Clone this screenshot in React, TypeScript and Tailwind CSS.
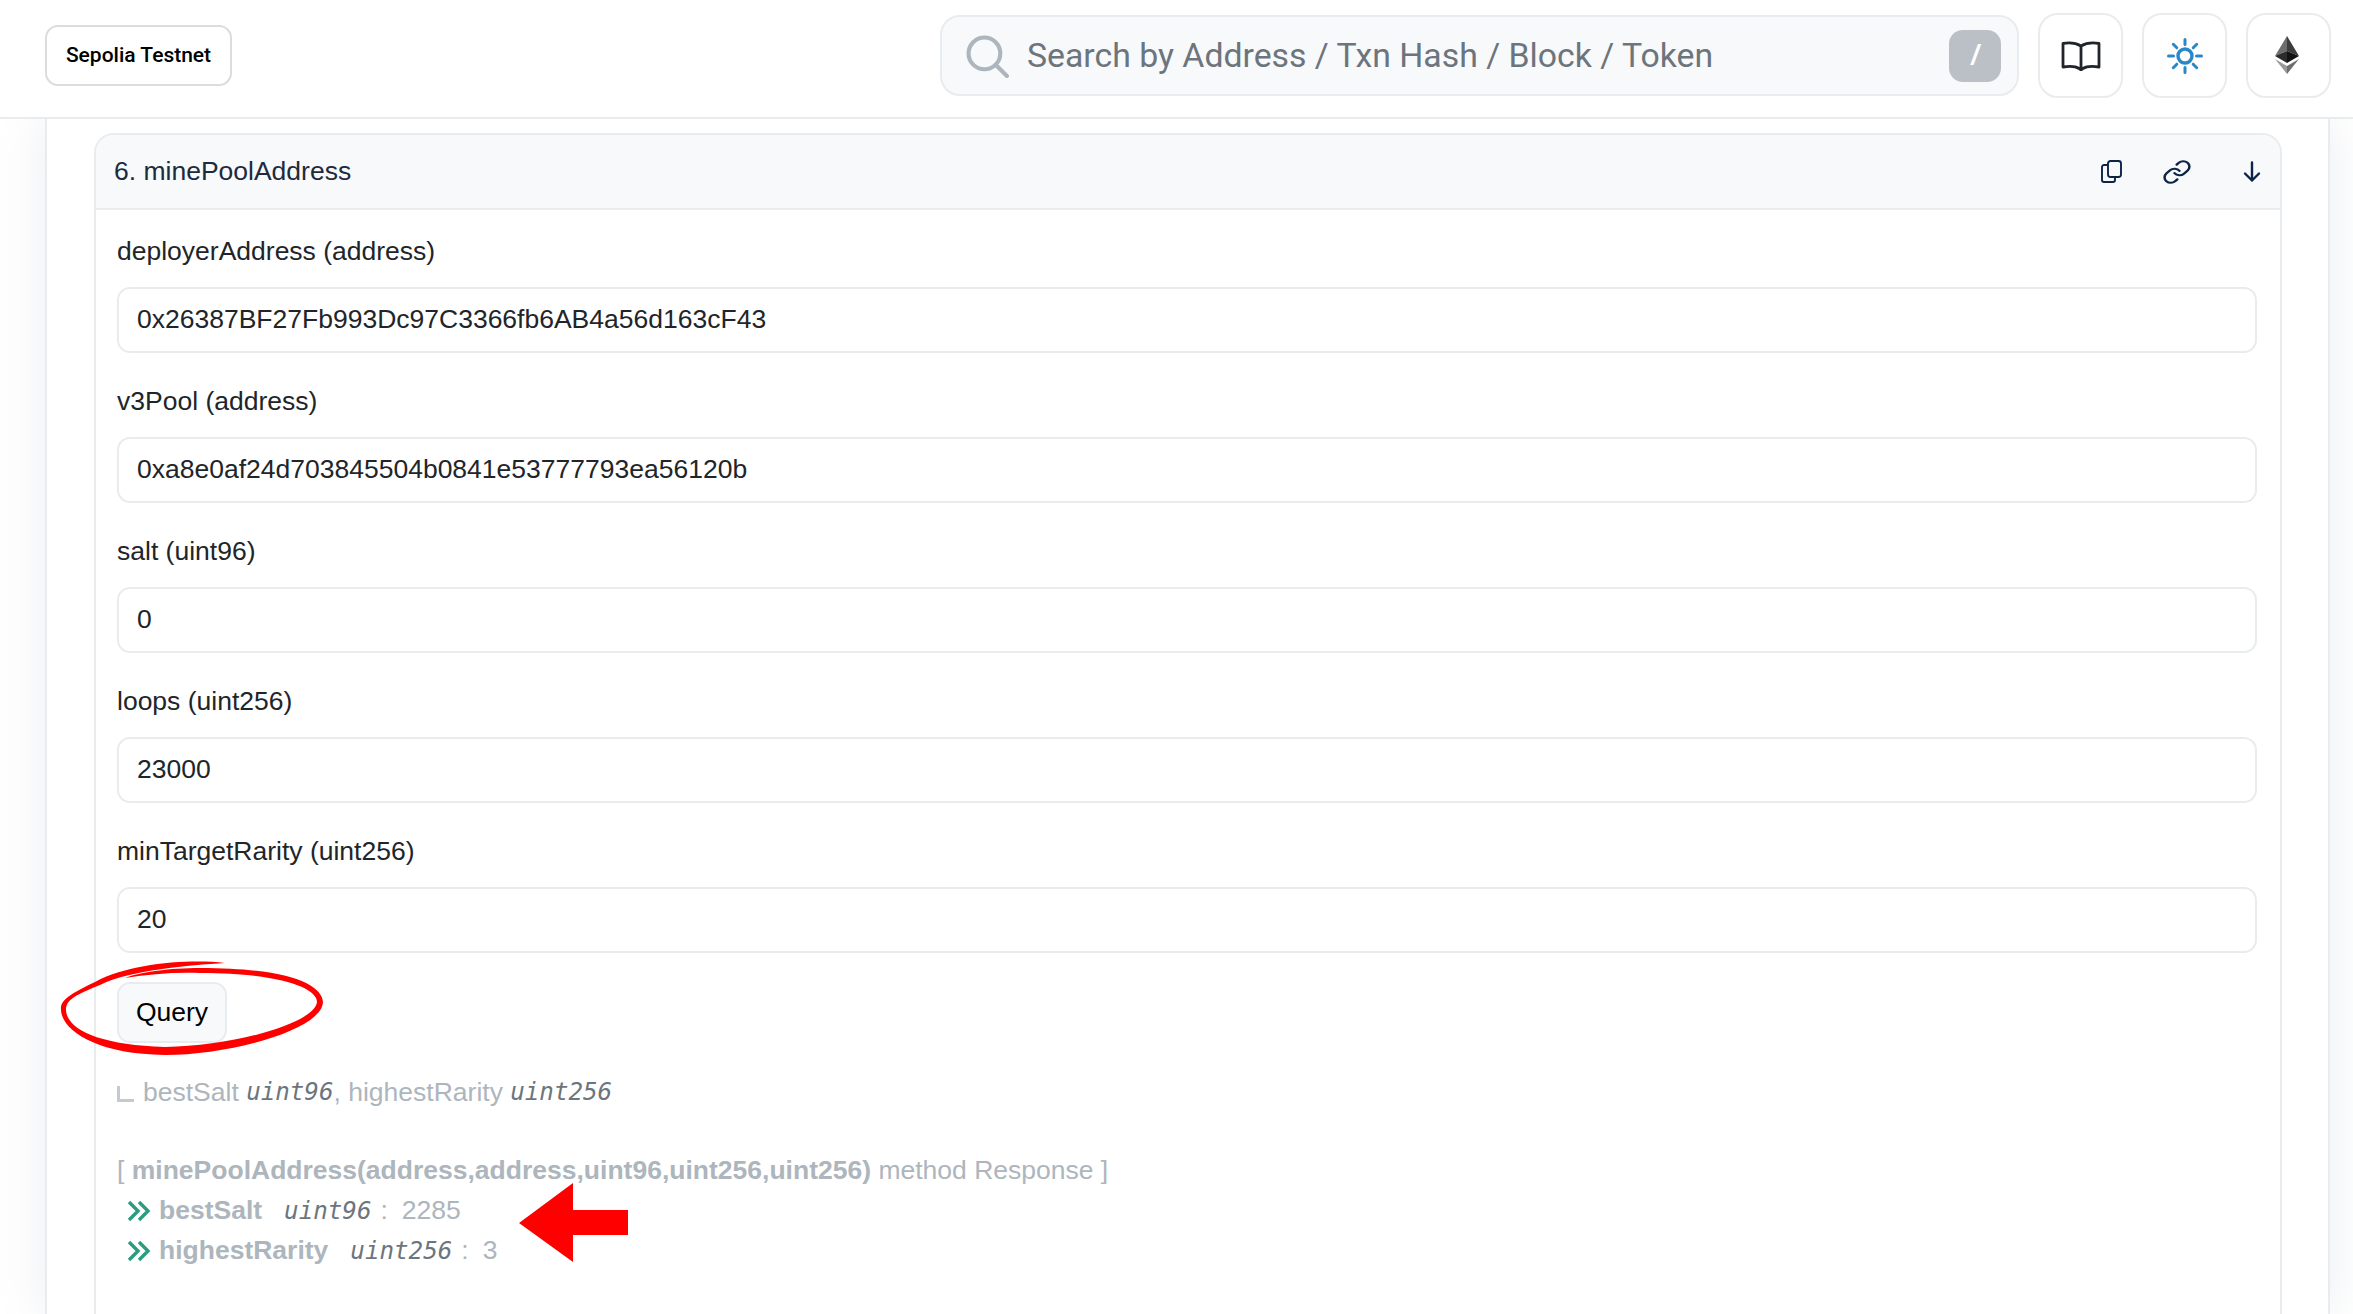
const sans = "font-['Liberation_Sans',Arial,sans-serif]";

const fields = [
  ["deployerAddress (address)", "0x26387BF27Fb993Dc97C3366fb6AB4a56d163cF43"],
  ["v3Pool (address)", "0xa8e0af24d703845504b0841e53777793ea56120b"],
  ["salt (uint96)", "0"],
  ["loops (uint256)", "23000"],
  ["minTargetRarity (uint256)", "20"],
];

function Mono({ children }: { children: React.ReactNode }) {
  return <span className="font-['DejaVu_Sans_Mono',monospace] italic text-[24.2px] text-[#6c757d]">{children}</span>;
}

function Chevrons() {
  return (
    <svg width="24" height="22" viewBox="0 0 24 22" fill="none" stroke="#2a9d7f" strokeWidth="3.4" className="shrink-0">
      <path d="M2 2l9 9-9 9M12 2l9 9-9 9" />
    </svg>
  );
}

function IconButton({ children }: { children: React.ReactNode }) {
  return (
    <div className="w-[85px] h-[85px] rounded-[20px] border-2 border-[#e9ecef] bg-white flex items-center justify-center">
      {children}
    </div>
  );
}

export default function App() {
  return (
    <div className={`relative h-[1314px] w-[2353px] overflow-hidden bg-white text-[#212529] ${sans}`}>
      <header className="h-[119px] border-b-2 border-[#e9ecef] bg-white flex items-center justify-between pl-[45px] pr-[22px] relative z-10">
        <div className="w-[187px] h-[61px] -mt-[6px] rounded-[13px] border-2 border-[#dcdcdc] flex items-center justify-center font-['Roboto',sans-serif] font-medium text-[21px] text-black">
          Sepolia Testnet
        </div>
        <div className="flex items-center gap-[19px] -mt-[6px]">
          <div className="w-[1079px] h-[81px] rounded-[20px] border-2 border-[#e9ecef] bg-[#f8f9fa] flex items-center pl-[24px] pr-[16px]">
            <svg width="43" height="43" viewBox="0 0 42 42" fill="none" stroke="#adb5bd" strokeWidth="4" strokeLinecap="round" className="shrink-0 mt-[1px]">
              <circle cx="18" cy="18" r="15.5" />
              <path d="M29 29l11 11" />
            </svg>
            <span className="ml-[18px] font-['Roboto',sans-serif] text-[33.8px] text-[#6c757d] flex-1 mt-[1px]">Search by Address / Txn Hash / Block / Token</span>
            <span className="w-[52px] h-[52px] rounded-[14px] bg-[#bbc0c6] text-white text-[27px] font-bold italic flex items-center justify-center">/</span>
          </div>
          <IconButton>
            <svg width="40" height="30" viewBox="0 0 40 30" fill="none" stroke="#212529" strokeWidth="2.8" strokeLinejoin="round">
              <path d="M20 5C15 2 8 1.500 2 2.500V26c6-1 13-.5 16 1.500L20 29l2-1.500C25 25.500 32 25 38 26V2.500C32 1.500 25 2 20 5zM20 5v23" />
            </svg>
          </IconButton>
          <IconButton>
            <svg width="36" height="36" viewBox="0 0 36 36" fill="none" stroke="#2a88c9" strokeWidth="3" strokeLinecap="round">
              <circle cx="18" cy="18" r="7" strokeWidth="3.4" />
              <path d="M18 1.500v5M18 29.500v5M1.500 18h5M29.500 18h5M6.300 6.300l3.500 3.500M26.200 26.200l3.500 3.500M6.300 29.700l3.500-3.500M26.200 9.800l3.500-3.500" />
            </svg>
          </IconButton>
          <IconButton>
            <svg width="24" height="38" viewBox="0 0 24 38" className="-mt-[1px] -ml-[3px]">
              <path d="M12 0L0 20l12-5z" fill="#6e6e6e" />
              <path d="M12 0l12 20-12-5z" fill="#3d3d3d" />
              <path d="M0 20l12-5v12z" fill="#2c2c2c" />
              <path d="M24 20l-12-5v12z" fill="#141414" />
              <path d="M0 23l12 15V30z" fill="#9a9a9a" />
              <path d="M24 23L12 38V30z" fill="#6f6f6f" />
            </svg>
          </IconButton>
        </div>
      </header>

      <main className="pl-[45px] h-[1195px]">
        <div className="w-[2285px] h-full border-x-2 border-[#e9ecef] bg-white pt-[14px] pl-[47px] shadow-[0_0_45px_rgba(189,197,209,0.3)]">
          <div className="w-[2188px] h-[1300px] border-2 border-[#e9ecef] rounded-t-[20px]">
            <div className="h-[75px] bg-[#f8f9fa] rounded-t-[18px] border-b-2 border-[#e9ecef] flex items-center pl-[18px] pr-[19px] text-[26.5px] text-[#1e2a3d]">
              <span className="flex-1">6. minePoolAddress</span>
              <svg width="22" height="24" viewBox="0 0 22 24" fill="none" stroke="#0b2447" strokeWidth="1.900" className="mr-[39px] mt-[1px]">
                <rect x="7" y="1" width="13" height="16" rx="2.500" />
                <path d="M7 5H3a2 2 0 0 0-2 2v13a2 2 0 0 0 2 2h9a2 2 0 0 0 2-2v-3" />
              </svg>
              <svg width="30" height="26" viewBox="0 0 24 24" preserveAspectRatio="none" fill="none" stroke="#0b2447" strokeWidth="2" strokeLinecap="round" strokeLinejoin="round" className="mr-[51px] mt-[1px]">
                <path d="M10 13a5 5 0 0 0 7.540.540l3-3a5 5 0 0 0-7.070-7.070l-1.720 1.710" />
                <path d="M14 11a5 5 0 0 0-7.540-.540l-3 3a5 5 0 0 0 7.070 7.070l1.710-1.710" />
              </svg>
              <svg width="18" height="22" viewBox="0 0 18 22" fill="none" stroke="#0b2447" strokeWidth="2.400" strokeLinecap="round" strokeLinejoin="round" className="mt-[1px]">
                <path d="M9 1.500v18M2 12.500l7 7 7-7" />
              </svg>
            </div>
            <div className="pl-[21px] pr-[21px] pt-[22px]">
              {fields.map(([label, value]) => (
                <div key={label} className="mb-[29px]">
                  <div className="h-[37px] leading-[39px] mb-[18px] text-[26.5px] text-[#212529]">{label}</div>
                  <div className="h-[66px] w-[2140px] rounded-[13px] border-2 border-[#e9ecef] bg-white flex items-center pl-[18px] text-[26.5px] text-[#212529]">
                    {value}
                  </div>
                </div>
              ))}
              <div className="w-[110px] h-[61px] rounded-[13px] border-2 border-[#e9ecef] bg-[#f8f9fa] flex items-center justify-center text-[26.5px] text-black">
                Query
              </div>
              <div className="mt-[31px] h-[37px] flex items-center text-[26.5px] text-[#adb5bd]">
                <span className="w-[17px] h-[16px] border-l-[3px] border-b-[3px] border-[#c4cad0] mr-[9px] mt-[2px]" />
                <span>bestSalt&nbsp;</span><Mono>uint96</Mono><span>,&nbsp;highestRarity&nbsp;</span><Mono>uint256</Mono>
              </div>
              <div className="mt-[41px] h-[37px] flex items-center text-[26.5px] text-[#adb5bd] whitespace-pre">
                <span>[ </span><b>minePoolAddress(address,address,uint96,uint256,uint256)</b><span> method Response ]</span>
              </div>
              <div className="mt-[2px] h-[40px] flex items-center text-[26.5px] text-[#adb5bd] pl-[10px]">
                <Chevrons />
                <b className="ml-[8px] mr-[22px]">bestSalt</b><Mono>uint96</Mono><span className="ml-[9px] mr-[14px]">:</span><span>2285</span>
              </div>
              <div className="h-[40px] flex items-center text-[26.5px] text-[#adb5bd] pl-[10px]">
                <Chevrons />
                <b className="ml-[8px] mr-[22px]">highestRarity</b><Mono>uint256</Mono><span className="ml-[9px] mr-[14px]">:</span><span>3</span>
              </div>
            </div>
          </div>
        </div>
      </main>

      <svg className="absolute left-[55px] top-[955px] z-20 pointer-events-none" width="590" height="315" viewBox="55 955 590 315">
        <path fill="#f00" d="M225 963C190 959 130 963 95 982C70 994 60 1000 61 1010C62 1030 95 1054 165 1055C230 1055 322 1030 323 1002C322 985 290 968 200 968C170 968 140 972 125 978C150 974 175 972 200 973C280 973 317 988 317 1002C315 1023 235 1046 165 1047C100 1045 67 1030 66 1010C66 1000 75 995 100 985C130 970 190 965 225 963Z" />
        <path fill="#f00" d="M519 1223L573 1183V1210H628V1235H573V1262Z" />
      </svg>
    </div>
  );
}
